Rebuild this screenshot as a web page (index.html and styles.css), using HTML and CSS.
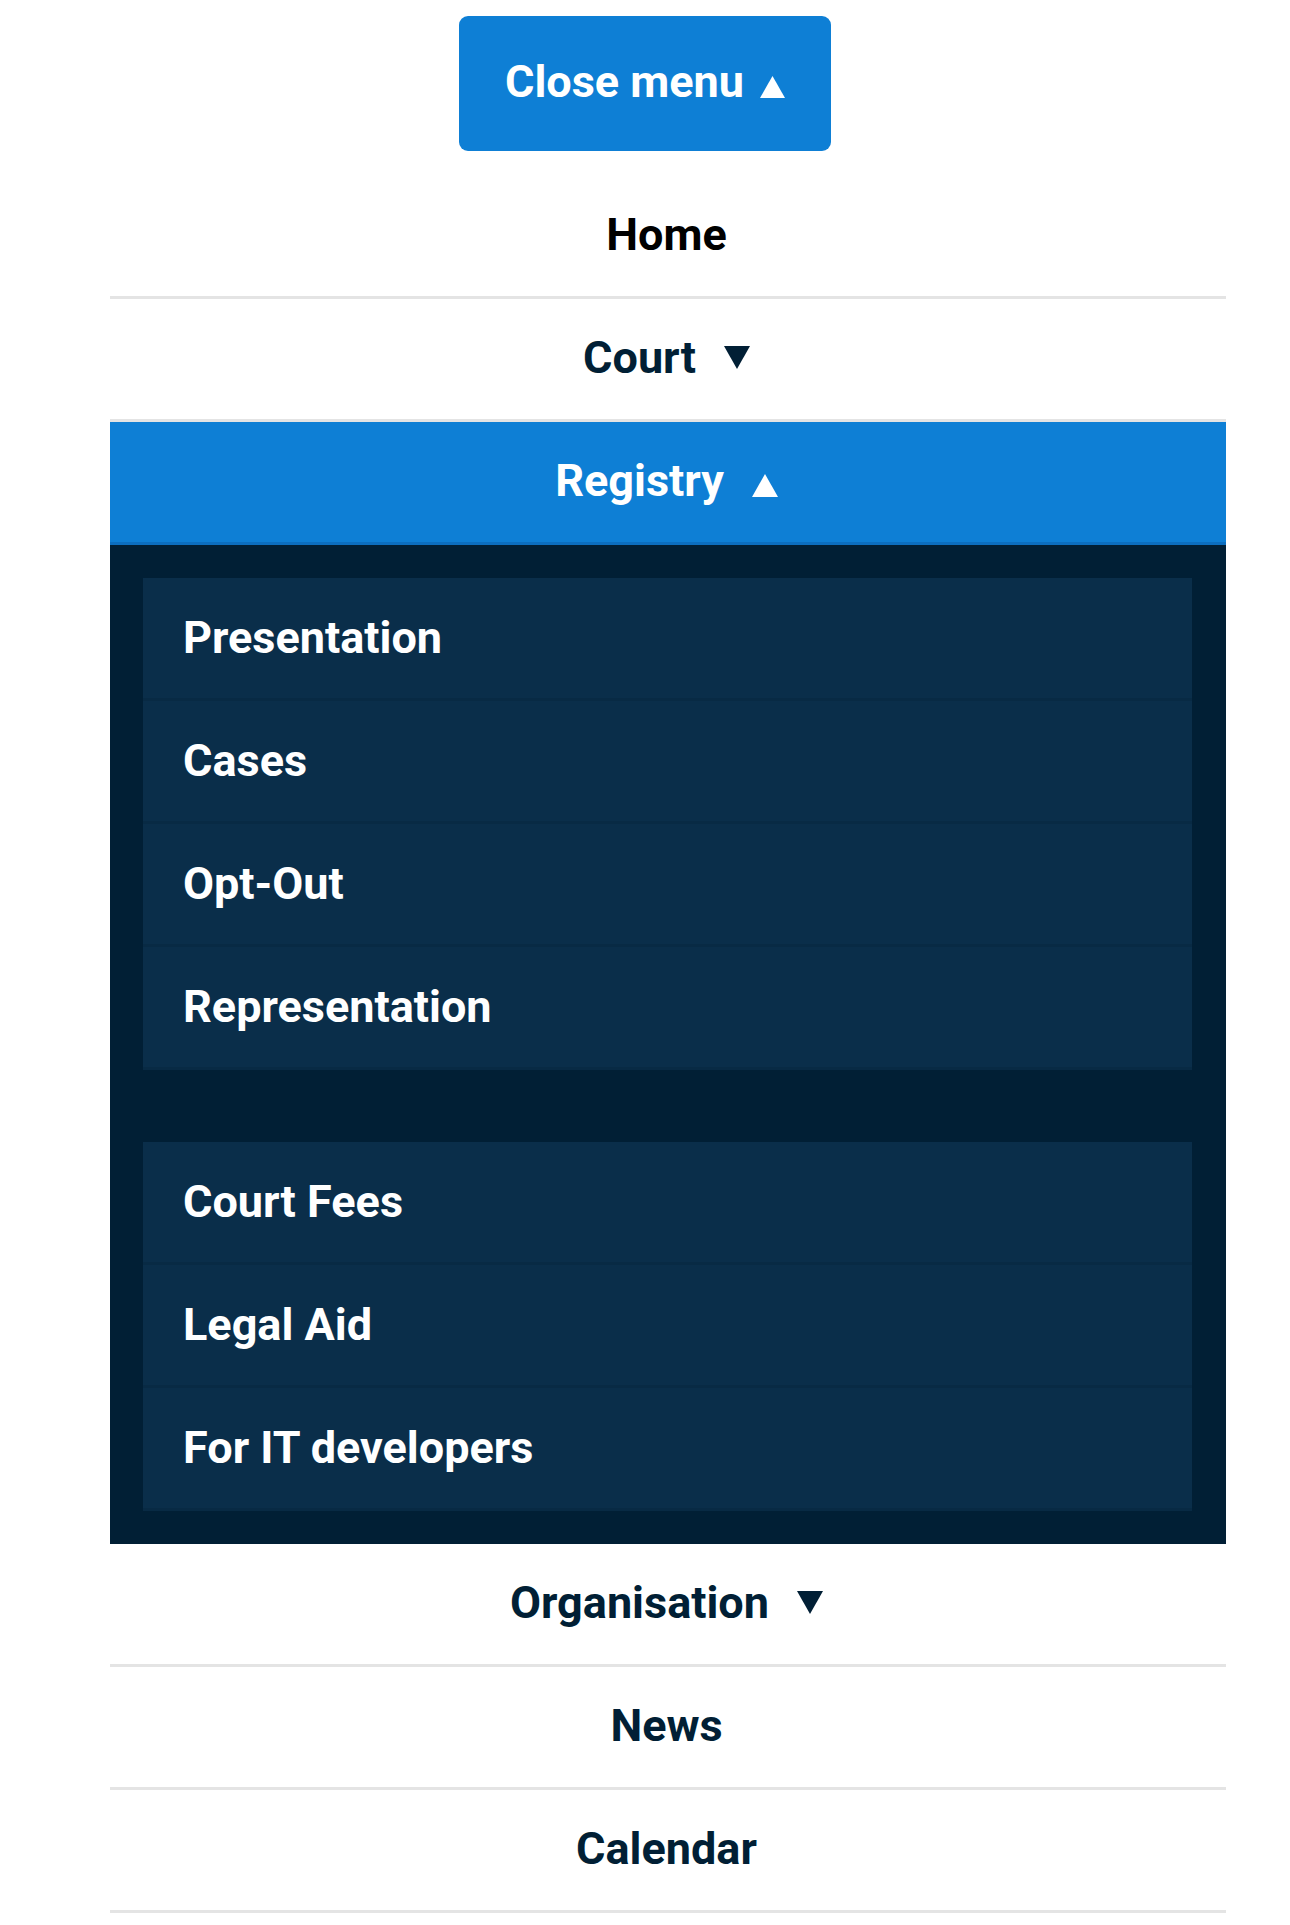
FILE: index.html
```html
<!DOCTYPE html>
<html lang="en">
<head>
<meta charset="utf-8">
<title>Menu</title>
<link rel="stylesheet" href="styles.css">
</head>
<body>
<div class="top">
  <button class="close-btn" type="button">
    <span>Close menu</span>
    <svg class="tri tri-btn" width="25" height="22" viewBox="0 0 25 22"><polygon points="12.5,0 25,22 0,22" fill="#ffffff"/></svg>
  </button>
</div>
<nav class="nav">
  <a class="row row-home" href="#"><span>Home</span></a>
  <a class="row" href="#"><span>Court</span>
    <svg class="tri tri-down" width="26" height="23" viewBox="0 0 26 23"><polygon points="0,0 26,0 13,23" fill="#011f35"/></svg>
  </a>
  <a class="row row-active" href="#"><span>Registry</span>
    <svg class="tri tri-up" width="26" height="23" viewBox="0 0 26 23"><polygon points="13,0 26,23 0,23" fill="#ffffff"/></svg>
  </a>
  <div class="submenu">
    <ul class="sublist">
      <li><a href="#">Presentation</a></li>
      <li><a href="#">Cases</a></li>
      <li><a href="#">Opt-Out</a></li>
      <li><a href="#">Representation</a></li>
    </ul>
    <ul class="sublist sublist-second">
      <li><a href="#">Court Fees</a></li>
      <li><a href="#">Legal Aid</a></li>
      <li><a href="#">For IT developers</a></li>
    </ul>
  </div>
  <a class="row" href="#"><span>Organisation</span>
    <svg class="tri tri-down" width="26" height="23" viewBox="0 0 26 23"><polygon points="0,0 26,0 13,23" fill="#011f35"/></svg>
  </a>
  <a class="row" href="#"><span>News</span></a>
  <a class="row" href="#"><span>Calendar</span></a>
</nav>
</body>
</html>
```
FILE: styles.css
```css
html, body {
  margin: 0;
  padding: 0;
  background: #ffffff;
}

body {
  font-family: Roboto, "Liberation Sans", Arial, sans-serif;
  font-weight: 700;
  font-size: 45px;
  color: #011f35;
}

.top {
  display: flex;
  justify-content: center;
  padding-top: 16px;
}

.close-btn {
  width: 372px;
  height: 135px;
  box-sizing: border-box;
  border: 0;
  border-radius: 9px;
  background: #0e7fd5;
  color: #ffffff;
  font-family: inherit;
  font-weight: 700;
  font-size: 45px;
  display: flex;
  align-items: center;
  justify-content: center;
  gap: 16px;
  padding: 0 0 4px 0;
  cursor: pointer;
}

.tri {
  display: block;
  flex: none;
}

.tri-btn {
  margin-top: 11px;
}

.nav {
  margin: 25px 0 0 110px;
  width: 1116px;
}

.row {
  box-sizing: content-box;
  display: flex;
  align-items: center;
  justify-content: center;
  gap: 28px;
  height: 117px;
  padding: 0 3px 3px 0;
  border-bottom: 3px solid #e4e4e4;
  color: #011f35;
  text-decoration: none;
}

.row-home {
  color: #000000;
}

.row-active {
  background: #0e7fd5;
  color: #ffffff;
  border-bottom: 3px solid #0c6ebf;
}

.tri-up {
  margin-top: 10px;
}

.submenu {
  background: #011f35;
  padding: 33px 34px 33px 33px;
}

.sublist {
  list-style: none;
  margin: 0;
  padding: 0;
}

.sublist-second {
  margin-top: 72px;
}

.sublist li a {
  display: flex;
  align-items: center;
  height: 118px;
  padding: 0 0 2px 40px;
  background: #0a2e4a;
  border-bottom: 3px solid #082a44;
  color: #ffffff;
  text-decoration: none;
}
```
